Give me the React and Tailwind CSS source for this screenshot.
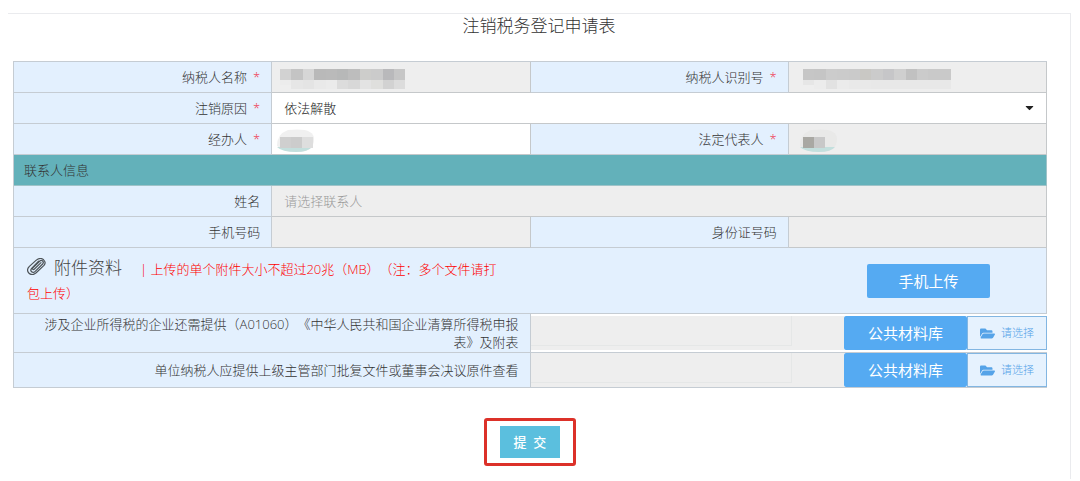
import { useState } from 'react';
import { FaFolderOpen, FaCaretDown } from 'react-icons/fa';

const NAME_TOP = ['#d2d2d2', '#c4c4c4', '#d6d6d6', '#b9b9b9', '#bababa', '#b7b8b8', '#bdbdbd', '#cdcdcb', '#cbcbcb', '#b9b9bb', '#c6c6c6'];
const NAME_BOTTOM = ['#ececec', '#e6e6e6', '#e4e4e4', '#e9e9e9', '#ebebeb', '#dcdcdc', '#d8d8d8', '#e3e3e3', '#dfdfdd', '#d2d2d2', '#dcdcdc'];
const ID_TOP = ['#c6c6c6', '#c5c5c5', '#cccccc', '#cbcbcb', '#cacaca', '#c9c8c4', '#cbcbcb', '#c6c6c8', '#cfcfcf', '#c1c1c1', '#cbcbcb', '#c9c9c9', '#c9c9c9'];
const ID_BOTTOM = ['#e6e6e6', '#ececec', '#e2e2e2', '#ebebeb', '#e9e9e9', '#e9e9e9', '#e8e8e8', '#e8e8e8', '#e8e8e8', '#e8e8e8', '#e8e8e8', '#e8e8e8', '#e8e8e8'];

const FILES = [
  {
    id: 'file-a01060',
    title: '涉及企业所得税的企业还需提供（A01060）《中华人民共和国企业清算所得税申报表》及附表',
    padding: 'py-[2px]',
  },
  {
    id: 'file-approval',
    title: '单位纳税人应提供上级主管部门批复文件或董事会决议原件查看',
    padding: 'py-0',
  },
];

// Masked value made of two rows of blocks
function Mosaic({ top, bottom, step }) {
  return (
    <svg width={Math.ceil(top.length * step)} height="21" className="absolute left-2 top-[7px]" shapeRendering="crispEdges" aria-hidden="true">
      {top.map((color, i) => (
        <rect key={i} x={i * step} y="0" width={step} height="11" fill={color} />
      ))}
      {bottom.map((color, i) => (
        <rect key={i} x={i * step} y="11" width={step} height={i === 0 ? 5 : 9} fill={color} />
      ))}
    </svg>
  );
}

function MaskedName({ base, colors }) {
  return (
    <svg width="40" height="26" viewBox="0 0 40 26" className="absolute left-1 top-[3px]" aria-hidden="true">
      <path d="M1 19 Q1 7 12 3 Q38 0 38 12 Q38 24 24 25 Q8 25 1 19Z" fill={base} />
      <path d="M1 20 H36 Q32 25 20 25 Q6 25 1 20Z" fill="#c3dfdd" />
      {colors.map((color, i) => (
        <rect key={i} x={4 + i * 11} y="10" width="11" height="11" fill={color} />
      ))}
    </svg>
  );
}

function Paperclip() {
  return (
    <svg width="19" height="17" viewBox="0 0 19 17" fill="none" stroke="#4d5358" strokeWidth="1.2" strokeLinecap="round" strokeLinejoin="round" className="mr-2 inline-block align-[-1px]" aria-hidden="true">
      <path d="M14 4.6 L7.2 11.2 C6.2 12.3 4.8 11 5.9 9.8 L12.6 3.2 C14.8 1.2 17.6 3.8 15.6 6 L8.2 13.4 C5.6 15.9 2.4 13 4.6 10.3 L11.6 3.2" />
      <path d="M17 7.4 L9.2 14.8 C6.6 17 3.6 16.8 1.8 15 C0 13 0.4 10.4 2.4 8.4 L9 2.4 C11.6 0.2 14.6 0 16.6 1.8 C18.4 3.6 18.4 5.8 17 7.4" />
    </svg>
  );
}

function Label({ htmlFor, required, children }) {
  return (
    <label htmlFor={htmlFor} className="flex h-[31px] items-center justify-end border-r border-b border-[#c5ccd3] bg-[#e3f0fe] pr-[11px]">
      {children}
      {required && <span className="ml-[6px] text-[#f0304a]">*</span>}
    </label>
  );
}

function Field({ id, wide, white, placeholder, children }) {
  return (
    <div className={`relative h-[31px] border-r border-b border-[#c5c8ca] ${wide ? 'col-span-3' : ''} ${white ? 'bg-white' : 'bg-[#eeeeee]'}`}>
      <input
        id={id}
        type="text"
        readOnly={!white}
        placeholder={placeholder}
        className="block h-full w-full bg-transparent px-3 placeholder:text-[#999999] focus:outline-none"
      />
      {children}
    </div>
  );
}

export default function App() {
  const [reason, setReason] = useState('依法解散');

  return (
    <div className="flex min-h-screen flex-col bg-white pt-[13px] pr-[9px] pb-[2px] pl-2 font-['Open_Sans','Noto_Sans_CJK_SC',sans-serif] text-[13px] leading-[18px] font-light text-[#333333] [text-spacing-trim:space-all]">
      <form onSubmit={e => e.preventDefault()} className="flex-1 border-t border-r border-[#eaebee] pr-[23px] pl-[5px]">
        <h1 className="-mr-[18px] text-center text-[17px] leading-6 font-light">注销税务登记申请表</h1>

        <div className="mt-[23px] border-t border-l border-[#c5ccd3]">
          <div className="grid grid-cols-4">
            <Label htmlFor="taxpayer" required>纳税人名称</Label>
            <Field id="taxpayer">
              <Mosaic top={NAME_TOP} bottom={NAME_BOTTOM} step={11.4} />
            </Field>
            <Label htmlFor="taxpayer-id" required>纳税人识别号</Label>
            <Field id="taxpayer-id">
              <div className="absolute top-0 left-[6px]">
                <Mosaic top={ID_TOP} bottom={ID_BOTTOM} step={11.4} />
              </div>
            </Field>

            <Label htmlFor="reason" required>注销原因</Label>
            <div className="relative col-span-3 h-[31px] border-r border-b border-[#c5c8ca] bg-white">
              <select
                id="reason"
                value={reason}
                onChange={e => setReason(e.target.value)}
                className="block h-full w-full appearance-none bg-transparent px-3 text-[#222222] focus:outline-none"
              >
                <option>依法解散</option>
              </select>
              <FaCaretDown className="pointer-events-none absolute top-2 right-[10px] size-[13px] text-[#222222]" />
            </div>

            <Label htmlFor="agent" required>经办人</Label>
            <Field id="agent" white>
              <MaskedName base="#f0f0f0" colors={['#cfcfcf', '#cccccc', '#dedede']} />
            </Field>
            <Label htmlFor="legal" required>法定代表人</Label>
            <Field id="legal">
              <div className="absolute top-0 left-[6px]">
                <MaskedName base="#e9e9e8" colors={['#a9a8a3', '#c8c8c8']} />
              </div>
            </Field>
          </div>

          <h2 className="flex h-[31px] items-center border-r border-b border-[#9fc3c8] bg-[#63b1ba] pl-[10px] font-light">
            联系人信息
          </h2>

          <div className="grid grid-cols-4">
            <Label htmlFor="contact">姓名</Label>
            <Field id="contact" wide placeholder="请选择联系人" />
            <Label htmlFor="phone">手机号码</Label>
            <Field id="phone" />
            <Label htmlFor="id-number">身份证号码</Label>
            <Field id="id-number" />
          </div>

          <div className="flex h-[66px] items-center justify-between border-r border-b border-[#c5ccd3] bg-[#e3f0fe]">
            <div className="w-1/2 pr-8 pl-[13px] leading-6">
              <Paperclip />
              <span className="mr-[18px] text-[17px] text-[#444444]">附件资料</span>
              <span className="text-[#ff0000]">| 上传的单个附件大小不超过20兆（MB）（注：多个文件请打包上传）</span>
            </div>
            <button type="button" className="mr-14 h-[34px] w-[123px] rounded-[2px] bg-[#55aaf2] text-[15px] font-normal text-white">
              手机上传
            </button>
          </div>

          {FILES.map(file => (
            <div key={file.id} className="grid grid-cols-2 border-b border-[#c5ccd3]">
              <label htmlFor={file.id} className="flex items-center justify-end border-r border-[#c5ccd3] bg-[#e3f0fe] pr-[11px] pl-6 text-right">
                {file.title}
              </label>
              <div className={`flex bg-white ${file.padding}`}>
                <div className="flex-1 bg-[#eeeeee]">
                  <input id={file.id} type="text" readOnly className="block h-[30px] w-[261px] border-r border-b border-[#e5e7e7] bg-transparent px-3 focus:outline-none" />
                </div>
                <button type="button" className="h-[34px] w-[123px] rounded-[2px] bg-[#55aaf2] text-[15px] font-normal text-white">
                  公共材料库
                </button>
                <button type="button" className="flex h-[34px] w-20 items-center justify-center gap-[6px] border border-[#82b6e2] bg-[#e6f2fe] text-[11px] text-[#55a3e8]">
                  <FaFolderOpen className="size-[15px]" />
                  请选择
                </button>
              </div>
            </div>
          ))}
        </div>

        <div className="mt-[30px] flex justify-center">
          <div className="rounded-[3px] border-[3px] border-[#dc3129] px-[13px] py-[5px]">
            <button type="submit" className="h-8 w-[60px] bg-[#5bbfde] font-medium whitespace-pre text-white">
              {'提  交'}
            </button>
          </div>
        </div>
      </form>
    </div>
  );
}
